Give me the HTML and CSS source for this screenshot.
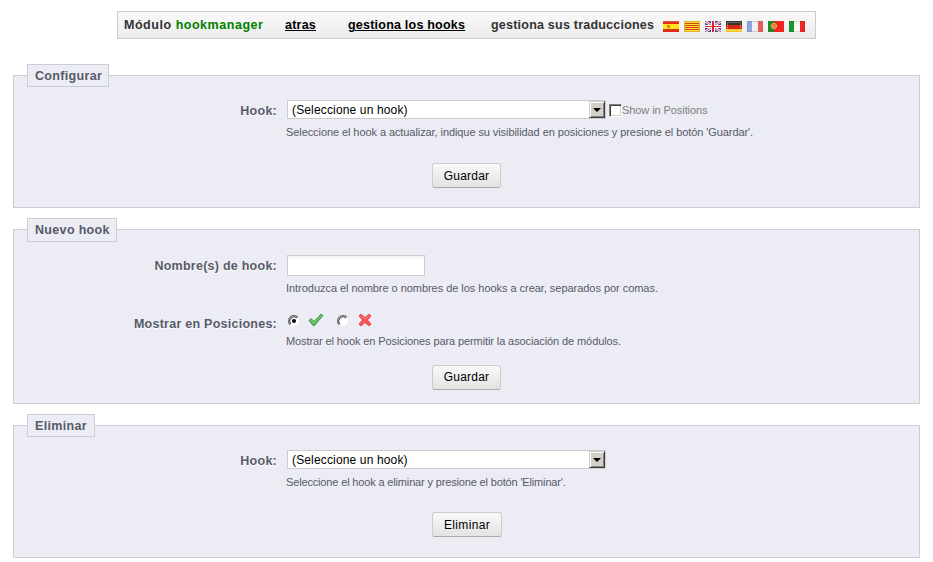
FILE: index.html
```html
<!DOCTYPE html>
<html lang="es">
<head>
<meta charset="utf-8">
<title>hookmanager</title>
<link rel="stylesheet" href="styles.css">
</head>
<body>
<nav class="bar">
  <span class="module">Módulo <b class="name">hookmanager</b></span>
  <a class="back" href="#">atras</a>
  <a class="manage" href="#">gestiona los hooks</a>
  <span class="translate">gestiona sus traducciones</span>
  <span class="flags">
    <svg viewBox="0 0 16 11"><path fill="#e02c14" d="M0 0h16v11H0z"/><path fill="#ffe31c" d="M0 3h16v5H0z"/><path fill="#d98a24" d="M4 4h3v3H4z"/><path fill="#fff" opacity=".2" d="M0 0h16v1H0z"/></svg>
    <svg viewBox="0 0 16 11"><path fill="#ffe12e" d="M0 0h16v11H0z"/><path fill="#d8401c" d="M1 2h14v1H1zM1 4h14v1H1zM1 6h14v1H1zM1 8h14v1H1z"/><path fill="none" stroke="#e0b428" d="M.5.5h15v10H.5z"/></svg>
    <svg viewBox="0 0 16 11"><path fill="#3450a8" d="M0 0h16v11H0z"/><path stroke="#fff" stroke-width="2.4" d="M0 0l16 11M16 0L0 11"/><path stroke="#e0404c" d="M0 0l16 11M16 0L0 11"/><path fill="#fff" d="M6 0h4v11H6zM0 4h16v3H0z"/><path fill="#dc2434" d="M7 0h2v11H7zM0 5h16v1H0z"/></svg>
    <svg viewBox="0 0 16 11"><path fill="#38342c" d="M0 0h16v4H0z"/><path fill="#d82818" d="M0 4h16v4H0z"/><path fill="#f8c420" d="M0 8h16v3H0z"/><path fill="none" stroke="#fff" opacity=".25" d="M1.500 1.500h13v8h-13z"/></svg>
    <svg viewBox="0 0 16 11"><path fill="#8ca8e0" d="M0 0h5v11H0z"/><path fill="#f0f0f4" d="M5 0h6v11H5z"/><path fill="#ec5c54" d="M11 0h5v11h-5z"/><path fill="none" stroke="#5c6490" opacity=".25" d="M.5.5h15v10H.5z"/></svg>
    <svg viewBox="0 0 16 11"><path fill="#268530" d="M0 0h6v11H0z"/><path fill="#f02420" d="M6 0h10v11H6z"/><circle cx="6" cy="5" r="2.500" fill="#e05028" stroke="#f4d840"/><path fill="#fff" opacity=".4" d="M5 4h2v2H5z"/></svg>
    <svg viewBox="0 0 16 11"><path fill="#189830" d="M0 0h5v11H0z"/><path fill="#f8f8f4" d="M5 0h6v11H5z"/><path fill="#f02428" d="M11 0h5v11h-5z"/><path fill="none" stroke="#403020" opacity=".15" d="M.5.5h15v10H.5z"/></svg>
  </span>
</nav>

<fieldset class="configure">
  <legend>Configurar</legend>
  <div class="row">
    <label>Hook:</label>
    <div class="field">
      <div class="line">
        <span class="select"><span class="value">(Seleccione un hook)</span><span class="arrow"></span></span>
        <span class="check"></span><span class="positions">Show in Positions</span>
      </div>
      <p class="help-configure">Seleccione el hook a actualizar, indique su visibilidad en posiciones y presione el botón 'Guardar'.</p>
    </div>
  </div>
  <button>Guardar</button>
</fieldset>

<fieldset class="create">
  <legend>Nuevo hook</legend>
  <div class="row">
    <label>Nombre(s) de hook:</label>
    <div class="field">
      <input type="text">
      <p class="help-name">Introduzca el nombre o nombres de los hooks a crear, separados por comas.</p>
    </div>
  </div>
  <div class="row visible">
    <label>Mostrar en Posiciones:</label>
    <div class="field">
      <div class="options">
        <svg class="radio" viewBox="0 0 12 12"><circle cx="6" cy="6" r="5" fill="#fff"/><path fill="none" stroke="#77756f" stroke-width="1.200" d="M2.100 9.900A5.500 5.500 0 0 1 9.900 2.100"/><path fill="none" stroke="#333" d="M2.800 9A4.400 4.400 0 0 1 9 2.800"/><circle cx="6" cy="6" r="2"/></svg>
        <svg class="tick" viewBox="0 0 16 14"><path fill="#59b45b" stroke="#3b8b42" stroke-width=".8" d="M1 7.500l2-2 3 3L13 1l2 1.500L6.500 12.500H5z"/><path fill="none" stroke="#9bd492" stroke-width=".8" d="M2.500 7L6 10l7.500-8"/></svg>
        <svg class="radio second" viewBox="0 0 12 12"><circle cx="6" cy="6" r="5" fill="#fff"/><path fill="none" stroke="#77756f" stroke-width="1.200" d="M2.100 9.900A5.500 5.500 0 0 1 9.900 2.100"/><path fill="none" stroke="#333" d="M2.800 9A4.400 4.400 0 0 1 9 2.800"/></svg>
        <svg class="cross" viewBox="0 0 14 14"><path fill="#fa5454" stroke="#df3338" stroke-width=".8" d="M1 3l2-2 4 3.500L11 1l2 2-3.500 4L13 11l-2 2-4-3.500L3 13l-2-2 3.500-4z"/><path stroke="#ff8b84" stroke-width=".8" d="M3 2.500l4 3.500 4-3.500" fill="none"/></svg>
      </div>
      <p class="help-visible">Mostrar el hook en Posiciones para permitir la asociación de módulos.</p>
    </div>
  </div>
  <button>Guardar</button>
</fieldset>

<fieldset class="remove">
  <legend>Eliminar</legend>
  <div class="row">
    <label>Hook:</label>
    <div class="field">
      <div class="line">
        <span class="select"><span class="value">(Seleccione un hook)</span><span class="arrow"></span></span>
      </div>
      <p class="help-remove">Seleccione el hook a eliminar y presione el botón 'Eliminar'.</p>
    </div>
  </div>
  <button class="wide">Eliminar</button>
</fieldset>
</body>
</html>
```
FILE: styles.css
```css
* { box-sizing: border-box; }
body {
  margin: 0;
  padding: 11px 13px 0;
  height: 562px;
  overflow: hidden;
  background: #fff;
  font: 11px/14px "Liberation Sans", Arial, sans-serif;
  color: #585a69;
}
.bar {
  display: flex;
  align-items: center;
  width: 699px;
  height: 28px;
  margin-left: 104px;
  padding: 0 0 0 6px;
  border: 1px solid #ccc;
  background: linear-gradient(#f9f9f9, #ececec);
  font-size: 12.5px;
  font-weight: bold;
  letter-spacing: .22px;
  color: #333;
  white-space: nowrap;
}
.bar a { color: #000; text-underline-offset: 1px; text-decoration-thickness: 1px; }
.name { color: #008000; }
.module { width: 161px; letter-spacing: .53px; }
.back { width: 63px; }
.manage { width: 143px; }
.translate { width: 172px; }
.flags { display: flex; gap: 5px; padding-top: 3px; }
.flags svg { width: 16px; height: 11px; display: block; }

fieldset {
  width: 907px;
  margin: 0;
  padding: 0 13px;
  border: 1px solid #ccced7;
  background: #ebecf4;
}
legend {
  height: 23px;
  padding: 0 6px 0 7px;
  border: 1px solid #ccced7;
  background: #ebecf4;
  font-size: 12.5px;
  line-height: 23px;
  font-weight: bold;
  letter-spacing: .33px;
}
.configure { height: 144px; margin-top: 25px; }
.configure legend { width: 82px; }
.create { height: 186px; margin-top: 10px; }
.create legend { width: 90px; height: 23.8px; }
.remove { height: 144px; margin-top: 10px; }
.remove legend { width: 68px; }
.row { display: grid; grid-template-columns: 250px 1fr; column-gap: 10px; padding-top: 13px; }
.create .visible { padding-top: 18px; }
label {
  padding-top: 4px;
  text-align: right;
  font-size: 12.5px;
  line-height: 15px;
  font-weight: bold;
  letter-spacing: .25px;
  text-shadow: 0 1px 0 #fff;
}
.line { display: flex; align-items: center; height: 19px; }
.select {
  display: flex;
  width: 319px;
  height: 19px;
  border: 1px solid #ccc;
  background: #fff;
  color: #000;
  font-size: 12px;
  line-height: 18px;
}
.value { flex: 1; padding-left: 4px; letter-spacing: .15px; }
.arrow {
  display: grid;
  place-items: center;
  width: 16px;
  height: 17px;
  background: #d4d0c8;
  border: 1px solid #d4d0c8;
  border-right-color: #404040;
  border-bottom-color: #404040;
  box-shadow: inset 1px 1px #fff, inset -1px -1px #808080;
}
.arrow::before {
  content: "";
  border: 4px solid transparent;
  border-top-color: #000;
  border-bottom: 0;
}
.check {
  width: 13px;
  height: 13px;
  margin: 2px 0 0 3px;
  background: #fff;
  border: 1px solid #808080;
  border-right-color: #fff;
  border-bottom-color: #fff;
  box-shadow: inset 1px 1px #404040, inset -1px -1px #d4d0c8;
}
.positions { color: #7f7f7f; letter-spacing: -.08px; }
p { margin: 6px 0 0 -1px; white-space: nowrap; }
.help-configure { letter-spacing: -.08px; }
.help-name { margin-top: 5px; letter-spacing: -.04px; }
.help-visible { letter-spacing: -.1px; }
.help-remove { letter-spacing: -.155px; }
input {
  display: block;
  width: 138px;
  height: 21px;
  border: 1px solid #ccc;
  background: linear-gradient(#f1f1f1, #fff 4px);
}
.options { display: flex; align-items: center; height: 15px; margin-left: 1px; }
.visible label { padding-top: 4px; }
.radio { width: 12px; height: 12px; margin-top: 1px; }
.tick { width: 16px; height: 14px; margin-left: 8px; }
.second { margin-left: 13px; }
.cross { width: 14px; height: 14px; margin-left: 9px; }
button {
  display: block;
  width: 69px;
  height: 25px;
  margin: 24px 0 0 405px;
  padding: 0;
  border: 1px solid #ccc;
  border-bottom-color: #aaa;
  border-radius: 3px;
  background: linear-gradient(#f9f9f9, #e3e3e3);
  font: 12px "Liberation Sans", Arial, sans-serif;
  letter-spacing: .2px;
  color: #000;
}
.create button { margin-top: 17px; }
.wide { width: 70px; margin-top: 23px; letter-spacing: .35px; }
```
